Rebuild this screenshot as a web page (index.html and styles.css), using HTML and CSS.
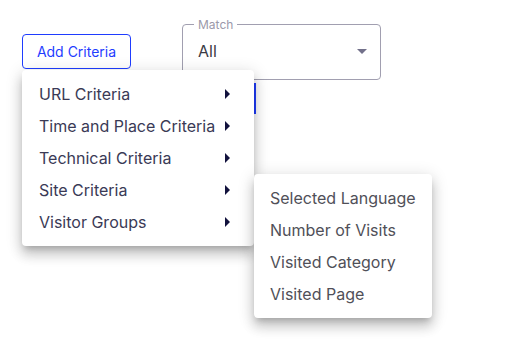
FILE: index.html
```html
<!DOCTYPE html>
<html lang="en">
<head>
    <meta charset="UTF-8">
    <meta name="viewport" content="width=device-width, initial-scale=1.0">
    <title>Criteria</title>
    <link rel="stylesheet" href="styles.css">
</head>
<body>
    <div class="toolbar">
        <div class="add-wrap">
            <button class="add-btn">Add Criteria</button>

            <ul class="menu">
                <li class="menu-item">URL Criteria <span class="caret"></span></li>
                <li class="menu-item">Time and Place Criteria <span class="caret"></span></li>
                <li class="menu-item">Technical Criteria <span class="caret"></span></li>
                <li class="menu-item open">Site Criteria <span class="caret"></span>
                    <ul class="menu submenu">
                        <li class="menu-item">Selected Language</li>
                        <li class="menu-item">Number of Visits</li>
                        <li class="menu-item">Visited Category</li>
                        <li class="menu-item">Visited Page</li>
                    </ul>
                </li>
                <li class="menu-item">Visitor Groups <span class="caret"></span></li>
            </ul>
        </div>

        <fieldset class="match">
            <legend>Match</legend>
            <div class="match-value">
                <span>All</span>
                <span class="drop-arrow"></span>
            </div>
        </fieldset>
    </div>

    <div class="focus-edge"></div>
</body>
</html>
```

FILE: styles.css
```css
:root {
    --blue: #1f3dff;
    --menu-text: #3a3a56;
    --sub-text: #505058;
    --border: #a19fb0;
}

* {
    margin: 0;
    padding: 0;
    box-sizing: border-box;
    font-family: 'Inter', 'Noto Sans', sans-serif;
}

html, body {
    min-height: 100vh;
}

body {
    background: #fff;
    color: #333;
}

.toolbar {
    display: flex;
    align-items: flex-start;
    gap: 51px;
    padding: 18px 0 0 22px;
}

.add-wrap {
    position: relative;
    margin-top: 16px;
    z-index: 2;
}

.add-btn {
    width: 109px;
    height: 35px;
    background: #fff;
    border: 1px solid var(--blue);
    border-radius: 4px;
    color: var(--blue);
    font-size: 14px;
    cursor: pointer;
}

.menu {
    position: absolute;
    top: calc(100% + 1px);
    left: 0;
    width: 232px;
    padding: 8px 0;
    list-style: none;
    background: #fff;
    border-radius: 4px;
    box-shadow: 0 5px 6px -3px rgba(0, 0, 0, 0.2), 0 9px 12px 1px rgba(0, 0, 0, 0.14), 0 3px 16px 2px rgba(0, 0, 0, 0.12);
}

.menu-item {
    position: relative;
    display: flex;
    align-items: center;
    justify-content: space-between;
    height: 32px;
    padding: 0 24px 0 17px;
    font-size: 16px;
    color: var(--menu-text);
    white-space: nowrap;
}

.caret {
    width: 0;
    height: 0;
    border-top: 5px solid transparent;
    border-bottom: 5px solid transparent;
    border-left: 5px solid #12123d;
}

.submenu {
    top: 0;
    left: 100%;
    width: 178px;
}

.submenu .menu-item {
    padding-left: 16px;
    color: var(--sub-text);
}

.match {
    width: 199px;
    padding: 0 15px;
    border: 1px solid var(--border);
    border-radius: 4px;
}

.match legend {
    margin-left: -4px;
    padding: 0 4px;
    font-size: 12px;
    line-height: 13px;
    color: #9b99aa;
}

.match-value {
    display: flex;
    align-items: center;
    justify-content: space-between;
    height: 48px;
    padding-bottom: 8px;
    font-size: 16px;
    color: #3a3a44;
}

.drop-arrow {
    width: 0;
    height: 0;
    margin-right: -2px;
    border-left: 5px solid transparent;
    border-right: 5px solid transparent;
    border-top: 5px solid #72708a;
}

.focus-edge {
    width: 234px;
    height: 31px;
    margin: 3px 0 0 22px;
    border-right: 2px solid var(--blue);
}
```
